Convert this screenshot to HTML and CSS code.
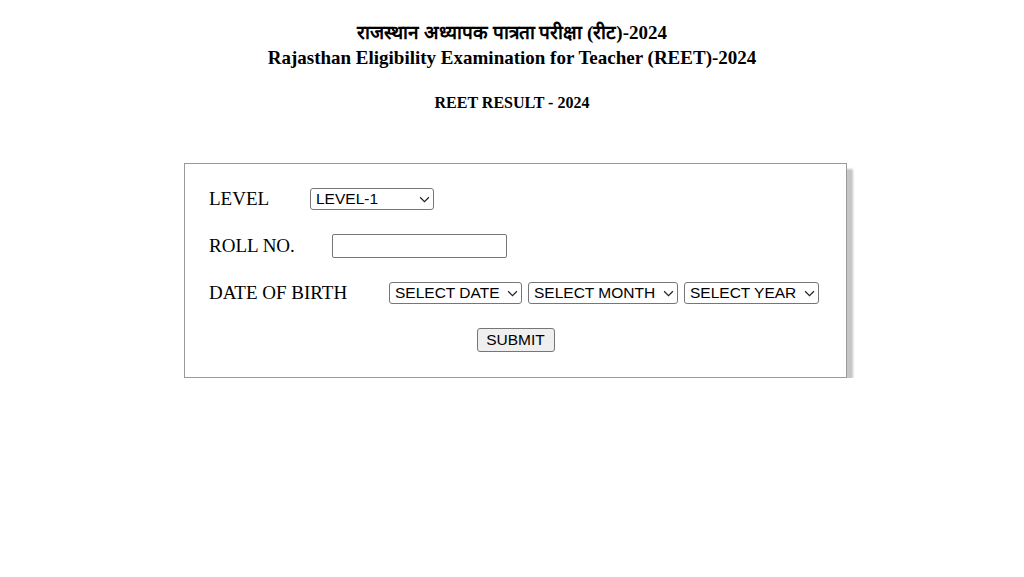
FILE: index.html
```html
<!DOCTYPE html>
<html lang="hi">
<head>
<meta charset="utf-8">
<title>REET RESULT - 2024</title>
<link rel="stylesheet" href="styles.css">
</head>
<body>
<header class="head">
  <div class="title">राजस्थान अध्यापक पात्रता परीक्षा (रीट)-2024</div>
  <div class="title">Rajasthan Eligibility Examination for Teacher (REET)-2024</div>
  <div class="sub">REET RESULT - 2024</div>
</header>
<form class="card">
  <div class="row">
    <label class="lbl lbl-level">LEVEL</label>
    <span class="sel sel-level">
      <select><option>LEVEL-1</option><option>LEVEL-2</option></select>
      <svg class="chev" viewBox="0 0 10 6" width="10" height="6"><path d="M1 1 L5 5 L9 1" fill="none" stroke="#222" stroke-width="1.1"/></svg>
    </span>
  </div>
  <div class="row">
    <label class="lbl lbl-roll">ROLL NO.</label>
    <input class="txt" type="text">
  </div>
  <div class="row">
    <label class="lbl lbl-dob">DATE OF BIRTH</label>
    <div class="dob">
      <span class="sel sel-date">
        <select><option>SELECT DATE</option></select>
        <svg class="chev" viewBox="0 0 10 6" width="10" height="6"><path d="M1 1 L5 5 L9 1" fill="none" stroke="#222" stroke-width="1.1"/></svg>
      </span>
      <span class="sel sel-month">
        <select><option>SELECT MONTH</option></select>
        <svg class="chev" viewBox="0 0 10 6" width="10" height="6"><path d="M1 1 L5 5 L9 1" fill="none" stroke="#222" stroke-width="1.1"/></svg>
      </span>
      <span class="sel sel-year">
        <select><option>SELECT YEAR</option></select>
        <svg class="chev" viewBox="0 0 10 6" width="10" height="6"><path d="M1 1 L5 5 L9 1" fill="none" stroke="#222" stroke-width="1.1"/></svg>
      </span>
    </div>
  </div>
  <div class="row row-center">
    <button class="btn" type="button">SUBMIT</button>
  </div>
</form>
</body>
</html>
```
FILE: styles.css
```css
html, body {
  margin: 0;
  padding: 0;
  background: #fff;
}
body {
  margin: 8px;
  font-family: "Liberation Serif", "Times New Roman", serif;
  color: #000;
}
.head {
  text-align: center;
  padding-top: 12px;
}
.title {
  font-weight: bold;
  font-size: 19px;
  line-height: 25px;
}
.sub {
  font-weight: bold;
  font-size: 16px;
  line-height: 18px;
  margin-top: 24px;
}
.card {
  box-sizing: border-box;
  width: 663px;
  margin: 51px 0 0 176px;
  border: 1px solid #9a9a9a;
  box-shadow: 6px 6px 2px #c6c6c6;
  background: #fff;
  padding: 23px 24px 25px 24px;
  display: flex;
  flex-direction: column;
  gap: 23px;
}
.row {
  display: flex;
  align-items: center;
  height: 24px;
}
.row-center {
  justify-content: center;
}
.lbl {
  font-size: 19px;
  line-height: 24px;
}
.lbl-level { width: 101px; }
.lbl-roll { width: 123px; }
.lbl-dob { width: 180px; }
.sel {
  position: relative;
  display: inline-block;
  height: 22px;
}
.sel select {
  appearance: none;
  -webkit-appearance: none;
  box-sizing: border-box;
  height: 22px;
  width: 100%;
  margin: 0;
  padding: 0 0 0 5px;
  border: 1px solid #767676;
  border-radius: 3px;
  background: #fff;
  color: #000;
  font-family: "Liberation Sans", Arial, sans-serif;
  font-size: 15.5px;
  line-height: 20px;
}
.chev {
  position: absolute;
  right: 4px;
  top: 8px;
  width: 11px;
  height: 7px;
  pointer-events: none;
}
.sel-level { width: 124px; }
.sel-date { width: 133px; }
.sel-month { width: 150px; }
.sel-year { width: 135px; }
.dob {
  display: flex;
  gap: 6px;
}
.txt {
  box-sizing: border-box;
  width: 175px;
  height: 24px;
  margin: 0;
  border: 1px solid #767676;
  border-radius: 2px;
  background: #fff;
}
.btn {
  box-sizing: border-box;
  width: 78px;
  height: 24px;
  margin: 0;
  padding: 0;
  border: 1px solid #767676;
  border-radius: 3px;
  background: #efefef;
  color: #000;
  font-family: "Liberation Sans", Arial, sans-serif;
  font-size: 15.5px;
}
```
